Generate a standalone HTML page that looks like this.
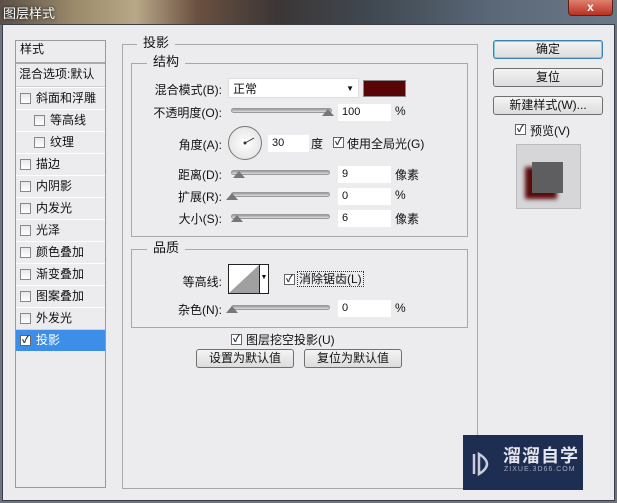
<!DOCTYPE html>
<html><head><meta charset="utf-8"><style>
*{margin:0;padding:0;box-sizing:border-box}
body{width:617px;height:503px;overflow:hidden;position:relative;font-family:"Liberation Sans","Noto Sans CJK SC",sans-serif;font-size:12px;color:#111;background:#6b7480}
.a{position:absolute}
.title{left:0;top:0;width:617px;height:25px;background:linear-gradient(90deg,#5a5048 0%,#9a8a6a 12%,#b8a888 22%,#6a5040 32%,#3c3636 45%,#404850 60%,#5a6878 80%,#6a7888 100%)}
.dlg{left:2px;top:24px;width:613px;height:477px;background:#ececee;border:1px solid #3a4048}
.gb{border:1px solid #a8a8ac}
.lg{background:#ececee;padding:0 6px;line-height:14px}
.cb{width:11px;height:11px;border:1px solid #888;background:linear-gradient(#e8e8e8,#fff)}
.cbk{width:11px;height:11px;border:1px solid #666;background:#fff;color:#234;font-size:10px;line-height:9px;text-align:center;font-weight:bold}
.row{left:16px;width:89px;height:22px;border-top:1px solid #fff;line-height:21px}
.inp{background:#fff;height:17px;line-height:17px;padding-left:4px;font-size:11px}
.sl{height:5px;border-radius:3px;background:linear-gradient(#999,#ddd);border:1px solid #999}
.th{width:0;height:0;border-left:6px solid transparent;border-right:6px solid transparent;border-bottom:7px solid #777}
.btn{border:1px solid #707070;border-radius:3px;background:linear-gradient(#f4f4f4,#dcdcdc);text-align:center;line-height:17px;height:19px}
.r{text-align:right}
</style></head><body>
<div class="a title"></div>
<div class="a" style="left:3px;top:3px;color:#fff;font-size:13px;text-shadow:0 0 3px #000">图层样式</div>
<div class="a" style="left:568px;top:0;width:45px;height:16px;background:linear-gradient(#e08070,#b83020);border:1px solid #602018;border-top:none;border-radius:0 0 4px 4px;color:#fff;text-align:center;font-weight:bold;line-height:14px">x</div>
<div class="a dlg"></div>

<div class="a" style="left:15px;top:40px;width:91px;height:448px;border:1px solid #9a9a9e;background:#ececee"></div>
<div class="a" style="left:16px;top:41px;width:89px;height:22px;line-height:16px;padding-left:4px;border-bottom:1px solid #aaa">样式</div>
<div class="a" style="left:16px;top:63px;width:89px;height:24px;line-height:20px;padding-left:3px;border-top:1px solid #aaa;border-bottom:1px solid #ccc;font-size:12px">混合选项:默认</div>
<div class="a row" style="top:87px"><span class="a cb" style="left:4px;top:5px"></span><span class="a" style="left:20px">斜面和浮雕</span></div>
<div class="a row" style="top:109px"><span class="a cb" style="left:18px;top:5px"></span><span class="a" style="left:34px">等高线</span></div>
<div class="a row" style="top:131px"><span class="a cb" style="left:18px;top:5px"></span><span class="a" style="left:34px">纹理</span></div>
<div class="a row" style="top:153px"><span class="a cb" style="left:4px;top:5px"></span><span class="a" style="left:20px">描边</span></div>
<div class="a row" style="top:175px"><span class="a cb" style="left:4px;top:5px"></span><span class="a" style="left:20px">内阴影</span></div>
<div class="a row" style="top:197px"><span class="a cb" style="left:4px;top:5px"></span><span class="a" style="left:20px">内发光</span></div>
<div class="a row" style="top:219px"><span class="a cb" style="left:4px;top:5px"></span><span class="a" style="left:20px">光泽</span></div>
<div class="a row" style="top:241px"><span class="a cb" style="left:4px;top:5px"></span><span class="a" style="left:20px">颜色叠加</span></div>
<div class="a row" style="top:263px"><span class="a cb" style="left:4px;top:5px"></span><span class="a" style="left:20px">渐变叠加</span></div>
<div class="a row" style="top:285px"><span class="a cb" style="left:4px;top:5px"></span><span class="a" style="left:20px">图案叠加</span></div>
<div class="a row" style="top:307px"><span class="a cb" style="left:4px;top:5px"></span><span class="a" style="left:20px">外发光</span></div>
<div class="a row" style="top:329px;background:#3d8ee8;color:#fff;border-top:1px solid #cce"><span class="a cbk" style="left:4px;top:5px">✓</span><span class="a" style="left:20px">投影</span></div>

<div class="a gb" style="left:122px;top:44px;width:356px;height:445px"></div>
<div class="a lg" style="left:137px;top:36px;font-size:13px">投影</div>
<div class="a gb" style="left:131px;top:63px;width:337px;height:174px"></div>
<div class="a lg" style="left:147px;top:55px;font-size:13px">结构</div>

<div class="a r" style="left:130px;width:92px;top:81px">混合模式(B):</div>
<div class="a inp" style="left:228px;top:78px;width:131px;height:20px;line-height:20px;font-size:12px;border:1px solid #ddd">正常<span class="a" style="right:4px;top:0;font-size:8px">▼</span></div>
<div class="a" style="left:363px;top:80px;width:43px;height:17px;background:#5a0505;border:1px solid #888"></div>

<div class="a r" style="left:130px;width:92px;top:104px">不透明度(O):</div>
<div class="a sl" style="left:231px;top:108px;width:101px"></div><div class="a th" style="left:322px;top:109px"></div>
<div class="a inp" style="left:338px;top:104px;width:53px">100</div><div class="a" style="left:395px;top:104px">%</div>

<div class="a r" style="left:130px;width:92px;top:136px">角度(A):</div>
<div class="a" style="left:228px;top:126px;width:34px;height:34px;border-radius:50%;border:1px solid #777;background:radial-gradient(#fff,#ddd)"></div>
<svg class="a" style="left:228px;top:126px" width="34" height="34"><line x1="17" y1="17" x2="26" y2="12" stroke="#333" stroke-width="1"/><circle cx="17" cy="17" r="1.5" fill="#333"/></svg>
<div class="a inp" style="left:268px;top:135px;width:41px">30</div><div class="a" style="left:311px;top:135px">度</div>
<div class="a cbk" style="left:333px;top:137px">✓</div><div class="a" style="left:347px;top:135px">使用全局光(G)</div>

<div class="a r" style="left:130px;width:92px;top:166px">距离(D):</div>
<div class="a sl" style="left:231px;top:170px;width:99px"></div><div class="a th" style="left:233px;top:171px"></div>
<div class="a inp" style="left:338px;top:166px;width:53px">9</div><div class="a" style="left:395px;top:166px">像素</div>
<div class="a r" style="left:130px;width:92px;top:188px">扩展(R):</div>
<div class="a sl" style="left:231px;top:192px;width:99px"></div><div class="a th" style="left:226px;top:193px"></div>
<div class="a inp" style="left:338px;top:188px;width:53px">0</div><div class="a" style="left:395px;top:188px">%</div>
<div class="a r" style="left:130px;width:92px;top:210px">大小(S):</div>
<div class="a sl" style="left:231px;top:214px;width:99px"></div><div class="a th" style="left:231px;top:215px"></div>
<div class="a inp" style="left:338px;top:210px;width:53px">6</div><div class="a" style="left:395px;top:210px">像素</div>

<div class="a gb" style="left:131px;top:249px;width:337px;height:79px"></div>
<div class="a lg" style="left:147px;top:241px;font-size:13px">品质</div>
<div class="a r" style="left:130px;width:92px;top:273px">等高线:</div>
<div class="a" style="left:228px;top:264px;width:41px;height:30px;border:1px solid #222;background:#fff"></div>
<svg class="a" style="left:229px;top:265px" width="30" height="28"><polygon points="0,28 30,0 30,28" fill="#a0a0a0"/></svg>
<div class="a" style="left:259px;top:265px;width:9px;height:28px;border-left:1px solid #222;font-size:7px;line-height:26px;text-align:center">▼</div>
<div class="a cbk" style="left:284px;top:274px">✓</div><div class="a" style="left:297px;top:271px;border:1px dotted #333;padding:0 1px;line-height:14px">消除锯齿(L)</div>
<div class="a r" style="left:130px;width:92px;top:301px">杂色(N):</div>
<div class="a sl" style="left:231px;top:305px;width:99px"></div><div class="a th" style="left:226px;top:306px"></div>
<div class="a inp" style="left:338px;top:300px;width:53px">0</div><div class="a" style="left:395px;top:301px">%</div>

<div class="a cbk" style="left:231px;top:334px">✓</div><div class="a" style="left:246px;top:331px">图层挖空投影(U)</div>
<div class="a btn" style="left:196px;top:349px;width:98px">设置为默认值</div>
<div class="a btn" style="left:304px;top:349px;width:98px">复位为默认值</div>

<div class="a btn" style="left:493px;top:40px;width:110px;border-color:#3c7fb1;box-shadow:inset 0 0 0 1px #8cd">确定</div>
<div class="a btn" style="left:493px;top:68px;width:110px">复位</div>
<div class="a btn" style="left:493px;top:96px;width:110px">新建样式(W)...</div>
<div class="a cbk" style="left:515px;top:124px">✓</div><div class="a" style="left:530px;top:122px">预览(V)</div>
<div class="a" style="left:516px;top:144px;width:65px;height:65px;background:#d6d6d8;border:1px solid #bbb"></div>
<div class="a" style="left:525px;top:167px;width:32px;height:32px;background:#5a0a0a;filter:blur(2px)"></div>
<div class="a" style="left:532px;top:162px;width:31px;height:31px;background:#5e5e60"></div>

<div class="a" style="left:463px;top:435px;width:120px;height:55px;background:#1e2d52"></div>
<svg class="a" style="left:470px;top:449px" width="28" height="30"><path d="M4 5 L4 25" stroke="#ccd" stroke-width="2.5" fill="none"/><path d="M9 5 Q25 15 9 25 Z" stroke="#ccd" stroke-width="2.5" fill="none"/></svg>
<div class="a" style="left:503px;top:442px;color:#e4e6ee;font-size:18px;font-weight:bold;letter-spacing:1px">溜溜自学</div>
<div class="a" style="left:504px;top:466px;color:#aab;font-size:7px;letter-spacing:1px">ZIXUE.3D66.COM</div>
</body></html>
